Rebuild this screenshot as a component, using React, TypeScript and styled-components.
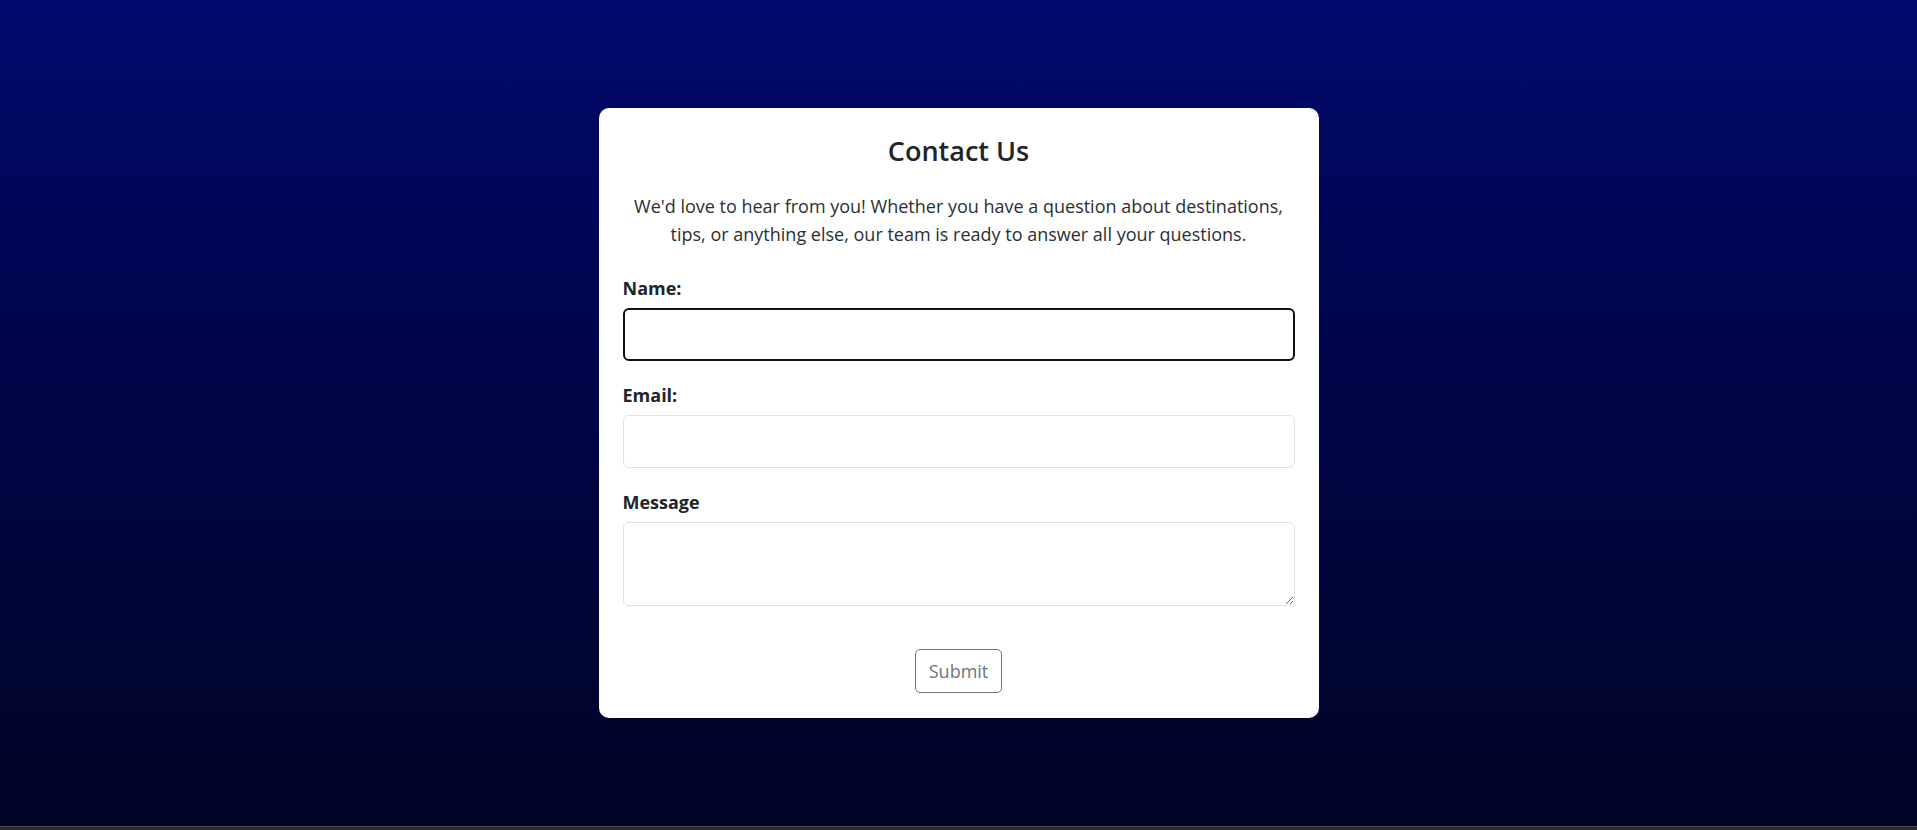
import React from "react";
import styled, { createGlobalStyle } from "styled-components";

const GlobalStyle = createGlobalStyle`
  * { box-sizing: border-box; }
  html, body { margin: 0; padding: 0; }
  body {
    font-family: "Open Sans", "Noto Sans", sans-serif;
    color: #212529;
    background: #00041f;
  }
`;

const Page = styled.div`
  min-height: 830px;
  display: flex;
  flex-direction: column;
`;

const Main = styled.main`
  height: 826px;
  display: flex;
  align-items: center;
  justify-content: center;
  background: linear-gradient(to bottom, #000a6e 0%, #000650 35%, #000425 100%);
`;

const Footer = styled.footer`
  height: 4px;
  background: #2a2a2a;
  border-top: 1px solid #4a4a4a;
`;

const Card = styled.section`
  width: 720px;
  background: #ffffff;
  border-radius: 10px;
  padding: 27px 24px 25px;
`;

const Title = styled.h2`
  margin: 0 0 24px;
  font-size: 27px;
  font-weight: 600;
  line-height: 1.2;
  text-align: center;
  color: #212529;
`;

const Intro = styled.p`
  margin: 0 0 28px;
  font-size: 18px;
  line-height: 28px;
  text-align: center;
  color: #2b2f33;
`;

const Field = styled.div<{ $last?: boolean }>`
  display: flex;
  flex-direction: column;
  margin-bottom: ${(p) => (p.$last ? "43px" : "22px")};
`;

const Label = styled.label`
  font-size: 18px;
  font-weight: 700;
  line-height: 24px;
  margin-bottom: 8px;
  color: #212529;
`;

const Input = styled.input<{ $focused?: boolean }>`
  height: 53px;
  width: 100%;
  padding: 0 12px;
  font: inherit;
  font-size: 18px;
  border-radius: 6px;
  border: ${(p) => (p.$focused ? "2px solid #111" : "1px solid #dee2e6")};
  outline: none;
  background: #fff;
`;

const TextArea = styled.textarea`
  height: 84px;
  width: 100%;
  padding: 8px 12px;
  font: inherit;
  font-size: 18px;
  border-radius: 6px;
  border: 1px solid #dee2e6;
  outline: none;
  resize: both;
  background: #fff;
  display: block;
`;

const Actions = styled.div`
  display: flex;
  justify-content: center;
`;

const SubmitButton = styled.button`
  height: 44px;
  padding: 0 13px;
  font: inherit;
  font-size: 18px;
  color: #6c757d;
  background: transparent;
  border: 1px solid #6c757d;
  border-radius: 5px;
  cursor: pointer;
`;

export default function App() {
  return (
    <>
      <GlobalStyle />
      <Page>
        <Main>
          <Card>
            <Title>Contact Us</Title>
            <Intro>
              We'd love to hear from you! Whether you have a question about destinations,
              <br />
              tips, or anything else, our team is ready to answer all your questions.
            </Intro>
            <form onSubmit={(e) => e.preventDefault()}>
              <Field>
                <Label htmlFor="name">Name:</Label>
                <Input id="name" type="text" $focused />
              </Field>
              <Field>
                <Label htmlFor="email">Email:</Label>
                <Input id="email" type="email" />
              </Field>
              <Field $last>
                <Label htmlFor="message">Message</Label>
                <TextArea id="message" />
              </Field>
              <Actions>
                <SubmitButton type="submit">Submit</SubmitButton>
              </Actions>
            </form>
          </Card>
        </Main>
        <Footer />
      </Page>
    </>
  );
}
